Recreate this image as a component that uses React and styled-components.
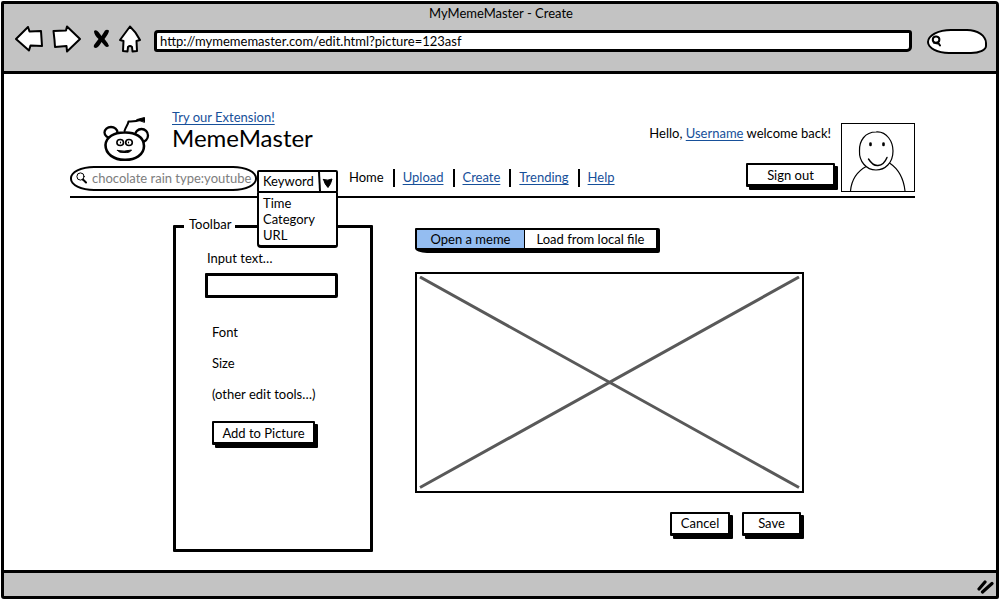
import React from "react";
import styled, { createGlobalStyle } from "styled-components";

const Global = createGlobalStyle`
  *, *::before, *::after { box-sizing: border-box; }
  body {
    margin: 0;
    background: #fff;
    color: #000;
    font: 13px/16px Lato, "Liberation Sans", sans-serif;
  }
  button, input, select { font: inherit; color: inherit; }
  p, h1, ul { margin: 0; padding: 0; }
  svg { display: block; flex: none; }
`;

const Window = styled.div`
  display: flex;
  flex-direction: column;
  min-height: calc(100vh - 2px);
  margin: 1px;
  border: 3px solid #000;
  border-radius: 2px 4px 2px 3px;
`;

const Chrome = styled.div`
  height: 70px;
  padding: 1px 9px 0 11px;
  background: #c3c3c3;
  border-bottom: 3px solid #000;
`;

const WindowTitle = styled.p`
  text-align: center;
`;

const ChromeRow = styled.div`
  display: flex;
  align-items: center;
  height: 36px;
`;

const IconButton = styled.button`
  display: flex;
  padding: 0;
  border: 0;
  background: none;
  margin-right: ${(p) => p.$gap}px;
`;

const AddressBar = styled.input`
  flex: 1;
  min-width: 0;
  height: 22px;
  margin-top: 4px;
  padding: 0 3px;
  background: #fff;
  border: 3px solid #000;
  border-radius: 4px 3px 5px 3px;
`;

const ChromeSearch = styled.label`
  display: flex;
  align-items: center;
  width: 60px;
  height: 25px;
  margin: 4px 0 0 15px;
  padding-left: 2px;
  background: #fff;
  border: 2px solid #000;
  border-radius: 24px 20px 16px 22px / 13px 14px 8px 12px;
`;

const BareInput = styled.input`
  flex: 1;
  min-width: 0;
  padding: 0;
  border: 0;
  outline: 0;
  background: none;
  &::placeholder { color: #7d7d7d; opacity: 1; }
`;

const Page = styled.div`
  flex: 1;
  padding: 35px 81px 18px 66px;
`;

const Header = styled.header`
  display: flex;
  justify-content: space-between;
  align-items: flex-end;
  padding-bottom: 3px;
  border-bottom: 2px solid #000;
`;

const Brand = styled.div`
  display: flex;
  align-items: flex-end;
  gap: 21px;
  min-height: 53px;
  margin-bottom: 4px;
  padding-left: 33px;
`;

const BrandText = styled.div`
  align-self: flex-start;
`;

const Title = styled.h1`
  font-size: 24px;
  line-height: 26px;
  font-weight: 400;
`;

const Link = styled.a`
  color: ${(p) => (p.$current ? "#000" : "#17509a")};
  text-decoration: ${(p) => (p.$current ? "none" : "underline")};
  text-decoration-thickness: 1px;
  text-underline-offset: 2px;
  text-decoration-skip-ink: none;
`;

const NavRow = styled.div`
  display: flex;
  align-items: flex-start;
  height: 27px;
`;

const SearchField = styled.label`
  display: flex;
  align-items: center;
  gap: 5px;
  width: 187px;
  height: 25px;
  padding: 0 0 2px 4px;
  border: 2px solid #000;
  border-radius: 24px / 12px;
`;

const Combo = styled.div`
  position: relative;
  width: 81px;
  margin-top: 4px;
`;

const ComboSelect = styled.select`
  display: block;
  width: 100%;
  height: 23px;
  padding: 0 20px 2px 4px;
  appearance: none;
  background: #fff;
  border: 2px solid #000;
  border-radius: 2px;
`;

const ComboArrow = styled.svg`
  position: absolute;
  top: 2px;
  right: 2px;
  pointer-events: none;
`;

const ComboMenu = styled.ul`
  position: absolute;
  top: 21px;
  left: 0;
  z-index: 1;
  width: 100%;
  padding: 2px 4px;
  list-style: none;
  background: #fff;
  border: 2px solid #000;
  border-bottom-width: 3px;
  border-radius: 2px 2px 3px 4px;
`;

const NavList = styled.ul`
  display: flex;
  margin: 3px 0 0 11px;
  list-style: none;
`;

const NavItem = styled.li`
  padding: 0 9px 2px 8px;
  border-left: 2px solid #000;
  &:first-child { padding-left: 0; border-left: 0; }
`;

const Account = styled.div`
  display: flex;
  align-items: flex-end;
  gap: 6px;
  padding-bottom: 1px;
`;

const Greeting = styled.div`
  display: flex;
  flex-direction: column;
  align-items: flex-end;
  gap: 22px;
  padding-bottom: 5px;
`;

const GreetingText = styled.p`
  padding-right: 4px;
`;

const Button = styled.button`
  width: ${(p) => p.$width}px;
  height: 24px;
  padding: 0;
  line-height: 18px;
  white-space: nowrap;
  background: #fff;
  border: 2px solid #000;
  border-bottom-width: 3px;
  border-radius: 1px;
  box-shadow: 3px 3px 0 #000;
`;

const Editor = styled.main`
  display: grid;
  grid-template-columns: 200px minmax(0, 1fr);
  gap: 42px;
  align-items: start;
  padding: 18px 111px 0 103px;
`;

const ToolPanel = styled.fieldset`
  min-width: 0;
  min-height: 336px;
  margin: 0;
  padding: 0;
  border: 3px solid #000;
  border-radius: 1px;
`;

const ToolLegend = styled.legend`
  margin-left: 8px;
  padding: 0 4px 4px 5px;
`;

const Tools = styled.div`
  display: flex;
  flex-direction: column;
  gap: 7px;
  padding: 14px 32px 0 29px;
`;

const TextInput = styled.input`
  width: 100%;
  height: 25px;
  padding: 0 4px;
  border: 3px solid #000;
  border-radius: 1px 2px 2px 1px;
`;

const ToolLabel = styled.label`
  padding-left: 2px;
`;

const ToolList = styled.div`
  display: flex;
  flex-direction: column;
  align-items: flex-start;
  gap: 15px;
  padding: 19px 0 4px 7px;
  white-space: nowrap;
`;

const ToolAction = styled.div`
  padding-left: 7px;
  margin-top: 8px;
`;

const Workspace = styled.section`
  display: flex;
  flex-direction: column;
  gap: 19px;
  padding-top: 12px;
`;

const Segments = styled.div`
  display: flex;
  align-self: flex-start;
  height: 25px;
  background: #000;
  border: solid #000;
  border-width: 2px 4px 5px 2px;
  border-radius: 1px 2px 2px 12px / 1px 2px 2px 5px;
`;

const Segment = styled.button`
  width: ${(p) => p.$width}px;
  padding: 0;
  border: 0;
  white-space: nowrap;
  background: ${(p) => (p.$active ? "#94bdf1" : "#fff")};
  & + & { border-left: 1px solid #000; }
`;

const Canvas = styled.div`
  aspect-ratio: 388 / 220;
  border: 2px solid #000;
  padding: 2px;
  svg { width: 100%; height: 100%; }
`;

const Actions = styled.div`
  display: flex;
  justify-content: flex-end;
  gap: 12px;
  padding-right: 3px;
`;

const StatusBar = styled.footer`
  display: flex;
  justify-content: flex-end;
  align-items: center;
  height: 26px;
  padding: 4px 2px 0 0;
  background: #c3c3c3;
  border-top: 3px solid #000;
`;

const ink = { stroke: "#000", strokeLinejoin: "round", strokeLinecap: "round" };

const BackIcon = () => (
  <svg width="28" height="27" viewBox="0 0 28 27">
    <path d="M1 13L13 1L14.500 5.500L26 5L27 20L15.500 19.500L14 24.500Z" fill="#fff" strokeWidth="2" {...ink} />
  </svg>
);

const ForwardIcon = () => (
  <svg width="30" height="28" viewBox="0 0 30 28">
    <path d="M1.500 6L14 5.500L15 1.500L28 14L15 26.500L14.500 21L3 22L2.500 15Z" fill="#fff" strokeWidth="2" {...ink} />
  </svg>
);

const StopIcon = () => (
  <svg width="17" height="20" viewBox="0 0 17 20">
    <path d="M1 2Q3 0 5.500 3L8.500 7L12 1.500Q14 0 16 1.500Q16 4 11.500 10Q15 14 16 17Q14 19 12 17L8.500 13Q6 18 3 19Q0 19 1 16Q4 12 5.500 10Q1 6 1 2Z" fill="#000" />
  </svg>
);

const HomeIcon = () => (
  <svg width="24" height="28" viewBox="0 0 24 28">
    <path d="M12 1.500L2 15L5.500 16L5 26L9.500 26.500L10 22Q12 20 14 22L14.500 26.500L19 26L18.500 16L22 15Q18 7 12 1.500Z" fill="#fff" strokeWidth="2" {...ink} />
  </svg>
);

const BoldSearchIcon = () => (
  <svg width="11" height="12" viewBox="0 0 11 12">
    <path d="M5.500 1.500C1 1 .500 7 4.500 7.800C9.500 8 9.500 2 5.500 1.500M7 7.500L9 10.500M3 7.800L7 8.500" fill="none" strokeWidth="2" {...ink} />
  </svg>
);

const SearchIcon = () => (
  <svg width="11" height="12" viewBox="0 0 11 12">
    <circle cx="4.500" cy="4.500" r="3.600" fill="none" strokeWidth="1" {...ink} />
    <path d="M7 7.500L10 10.500" strokeWidth="2" {...ink} />
  </svg>
);

const Mascot = () => (
  <svg width="48" height="46" viewBox="0 0 48 46" fill="none" {...ink}>
    <ellipse cx="8" cy="16.500" rx="6.500" ry="5.500" strokeWidth="2.300" />
    <ellipse cx="38.500" cy="19.500" rx="6.500" ry="6.500" strokeWidth="2.300" />
    <path d="M21.500 15C22.500 11 25 9 25.500 5.500Q32 6 39 3.500" strokeWidth="2" />
    <path d="M34 3.500L41.500 1.500V6Z" fill="#000" strokeWidth="1" />
    <path d="M21 16.500C32 16 41 21 41 30C41 39 32 44 22 43.800C11 44 2.500 38 2.500 29C3 21 11 16.500 21 16.500Z" fill="#fff" strokeWidth="2.600" />
    <ellipse cx="17.200" cy="26.500" rx="3.300" ry="3" strokeWidth="1.600" />
    <ellipse cx="26" cy="26.500" rx="3.300" ry="3" strokeWidth="1.600" />
    <path d="M17.500 26.200v.600M25.500 26.200v.600" strokeWidth="1.200" />
    <path d="M14.500 34.500Q21 36 28.500 34Q27 37 21 36.500Q16 37 14.500 34.500Z" fill="#000" strokeWidth="1" />
  </svg>
);

const Portrait = () => (
  <svg width="74" height="69" viewBox="0 0 74 69" fill="none" {...ink}>
    <rect x=".500" y=".500" width="73" height="68" strokeLinejoin="miter" />
    <path d="M26 43Q11 51 9.500 68M48.500 40Q62 49 64 68" strokeWidth="1.200" />
    <path d="M35 9C46 8 52 19 52 28C52 40 44 47 35 47C25 47 18 38 18.500 28C18 18 24 9 35 9Z" fill="#fff" strokeWidth="1.200" />
    <path d="M29.500 20.500v1.500M42.500 20.500v1.500" strokeWidth="2.600" />
    <path d="M27.500 36Q32 43 37 42.500Q43 42 46 34.500" strokeWidth="1.400" />
  </svg>
);

export default function App() {
  return (
    <>
      <Global />
      <Window>
        <Chrome>
          <WindowTitle>MyMemeMaster - Create</WindowTitle>
          <ChromeRow>
            <IconButton $gap={9} aria-label="Back"><BackIcon /></IconButton>
            <IconButton $gap={11} aria-label="Forward"><ForwardIcon /></IconButton>
            <IconButton $gap={8} aria-label="Stop"><StopIcon /></IconButton>
            <IconButton $gap={12} aria-label="Home page"><HomeIcon /></IconButton>
            <AddressBar aria-label="Address" defaultValue="http://mymememaster.com/edit.html?picture=123asf" />
            <ChromeSearch>
              <BoldSearchIcon />
              <BareInput type="text" aria-label="Search the web" />
            </ChromeSearch>
          </ChromeRow>
        </Chrome>

        <Page>
          <Header>
            <div>
              <Brand>
                <Mascot />
                <BrandText>
                  <Link href="#extension">Try our Extension!</Link>
                  <Title>MemeMaster</Title>
                </BrandText>
              </Brand>
              <NavRow>
                <SearchField>
                  <SearchIcon />
                  <BareInput type="text" aria-label="Search memes" placeholder="chocolate rain type:youtube" />
                </SearchField>
                <Combo>
                  <ComboSelect aria-label="Search by" defaultValue="Keyword">
                    <option>Keyword</option>
                    <option>Time</option>
                    <option>Category</option>
                    <option>URL</option>
                  </ComboSelect>
                  <ComboArrow width="18" height="19" viewBox="0 0 18 19">
                    <path d="M1 0L2 19" stroke="#000" strokeWidth="2" />
                    <path d="M5.500 7.500Q10 9 14 7Q13 12 10 15.500Q7 13 5.500 7.500Z" strokeWidth="1" {...ink} />
                  </ComboArrow>
                  <ComboMenu>
                    <li>Time</li>
                    <li>Category</li>
                    <li>URL</li>
                  </ComboMenu>
                </Combo>
                <nav>
                  <NavList>
                    <NavItem><Link href="#home" $current>Home</Link></NavItem>
                    <NavItem><Link href="#upload">Upload</Link></NavItem>
                    <NavItem><Link href="#create">Create</Link></NavItem>
                    <NavItem><Link href="#trending">Trending</Link></NavItem>
                    <NavItem><Link href="#help">Help</Link></NavItem>
                  </NavList>
                </nav>
              </NavRow>
            </div>
            <Account>
              <Greeting>
                <GreetingText>
                  Hello, <Link href="#user">Username</Link> welcome back!
                </GreetingText>
                <Button $width={89}>Sign out</Button>
              </Greeting>
              <Portrait />
            </Account>
          </Header>

          <Editor>
            <ToolPanel>
              <ToolLegend>Toolbar</ToolLegend>
              <Tools>
                <ToolLabel htmlFor="meme-text">Input text…</ToolLabel>
                <TextInput id="meme-text" type="text" />
                <ToolList>
                  <p>Font</p>
                  <p>Size</p>
                  <p>(other edit tools…)</p>
                </ToolList>
                <ToolAction>
                  <Button $width={103}>Add to Picture</Button>
                </ToolAction>
              </Tools>
            </ToolPanel>
            <Workspace>
              <Segments>
                <Segment $width={107} $active>Open a meme</Segment>
                <Segment $width={132}>Load from local file</Segment>
              </Segments>
              <Canvas>
                <svg viewBox="0 0 380 212" preserveAspectRatio="none">
                  <path d="M1 1L379 211M379 1L1 211" stroke="#595959" strokeWidth="3" />
                </svg>
              </Canvas>
              <Actions>
                <Button $width={60}>Cancel</Button>
                <Button $width={59}>Save</Button>
              </Actions>
            </Workspace>
          </Editor>
        </Page>

        <StatusBar>
          <svg width="17" height="14" viewBox="0 0 17 14">
            <path d="M2 9L8 2M5.500 12L15 3.500" fill="none" strokeWidth="3.200" {...ink} />
          </svg>
        </StatusBar>
      </Window>
    </>
  );
}
